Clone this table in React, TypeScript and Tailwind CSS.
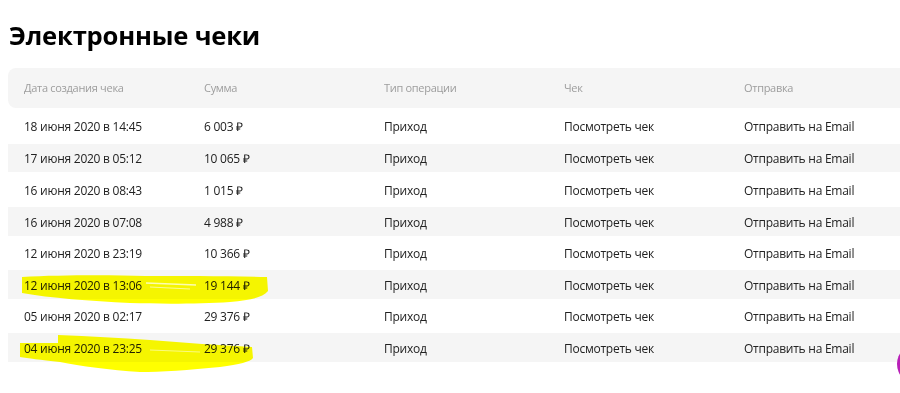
import React from "react";

const rows = [
  ["18 июня 2020 в 14:45", "6 003 ₽"],
  ["17 июня 2020 в 05:12", "10 065 ₽"],
  ["16 июня 2020 в 08:43", "1 015 ₽"],
  ["16 июня 2020 в 07:08", "4 988 ₽"],
  ["12 июня 2020 в 23:19", "10 366 ₽"],
  ["12 июня 2020 в 13:06", "19 144 ₽"],
  ["05 июня 2020 в 02:17", "29 376 ₽"],
  ["04 июня 2020 в 23:25", "29 376 ₽"],
];

const heights = ["h-[36px]", "h-[28px]", "h-[35px]", "h-[29px]", "h-[34px]", "h-[29px]", "h-[34px]", "h-[29px]"];

export default function App() {
  return (
    <div className="relative w-[900px] h-[393px] overflow-hidden bg-white font-['Open_Sans',sans-serif] text-[#222]">
      <h1 className="pl-[9px] pt-[20px] text-[25.6px] font-bold leading-[32px] tracking-[-0.2px] text-black">
        Электронные чеки
      </h1>
      <div className="ml-2 mt-[16px] w-[920px]">
        <div className="grid h-10 grid-cols-[180px_180px_180px_180px_180px] items-center rounded-lg bg-[#f5f5f5] pl-4 text-[11px] tracking-[-0.3px] text-[#9d9d9d]">
          <div>Дата создания чека</div>
          <div>Сумма</div>
          <div>Тип операции</div>
          <div>Чек</div>
          <div>Отправка</div>
        </div>
        {rows.map((r, i) => (
          <div
            key={i}
            className={`grid grid-cols-[180px_180px_180px_180px_180px] items-center pl-4 pt-[2px] text-[12px] tracking-[-0.25px] ${heights[i]} ${
              i % 2 === 1 ? "bg-[#f5f5f5]" : "bg-white"
            }`}
          >
            <div>{r[0]}</div>
            <div>{r[1]}</div>
            <div>Приход</div>
            <div>Посмотреть чек</div>
            <div>Отправить на Email</div>
          </div>
        ))}
      </div>

      <svg
        className="pointer-events-none absolute left-0 top-0 mix-blend-multiply"
        width="900"
        height="393"
        viewBox="0 0 900 393"
      >
        <path
          d="M22 277 C60 275 110 275 145 276 C180 276 230 276 267 277 L268 291 C262 298 250 300 230 302 C200 304 160 304 130 303 C90 301 50 298 22 293 Z"
          fill="#ffff00"
        />
        <path
          d="M20 343 L58 343 L58 335 C90 336 120 338 150 340 C185 343 220 345 252 347 L253 358 C250 362 240 364 220 367 C190 370 160 372 140 372 C110 370 80 366 60 362 C40 360 28 358 20 357 Z"
          fill="#ffff00"
        />
      </svg>
      <svg
        className="pointer-events-none absolute left-0 top-0"
        width="900"
        height="393"
        viewBox="0 0 900 393"
      >
        <path d="M146 283 L196 285" stroke="#ffffff" strokeOpacity="0.7" strokeWidth="1.5" />
        <path d="M150 287 L190 289" stroke="#ffffff" strokeOpacity="0.6" strokeWidth="1" />
        <path d="M150 350 L200 352" stroke="#ffffff" strokeOpacity="0.5" strokeWidth="1" />
      </svg>

      <div className="absolute left-[897px] top-[344px] h-10 w-10 rounded-full bg-[#b81fb8]" />
    </div>
  );
}
